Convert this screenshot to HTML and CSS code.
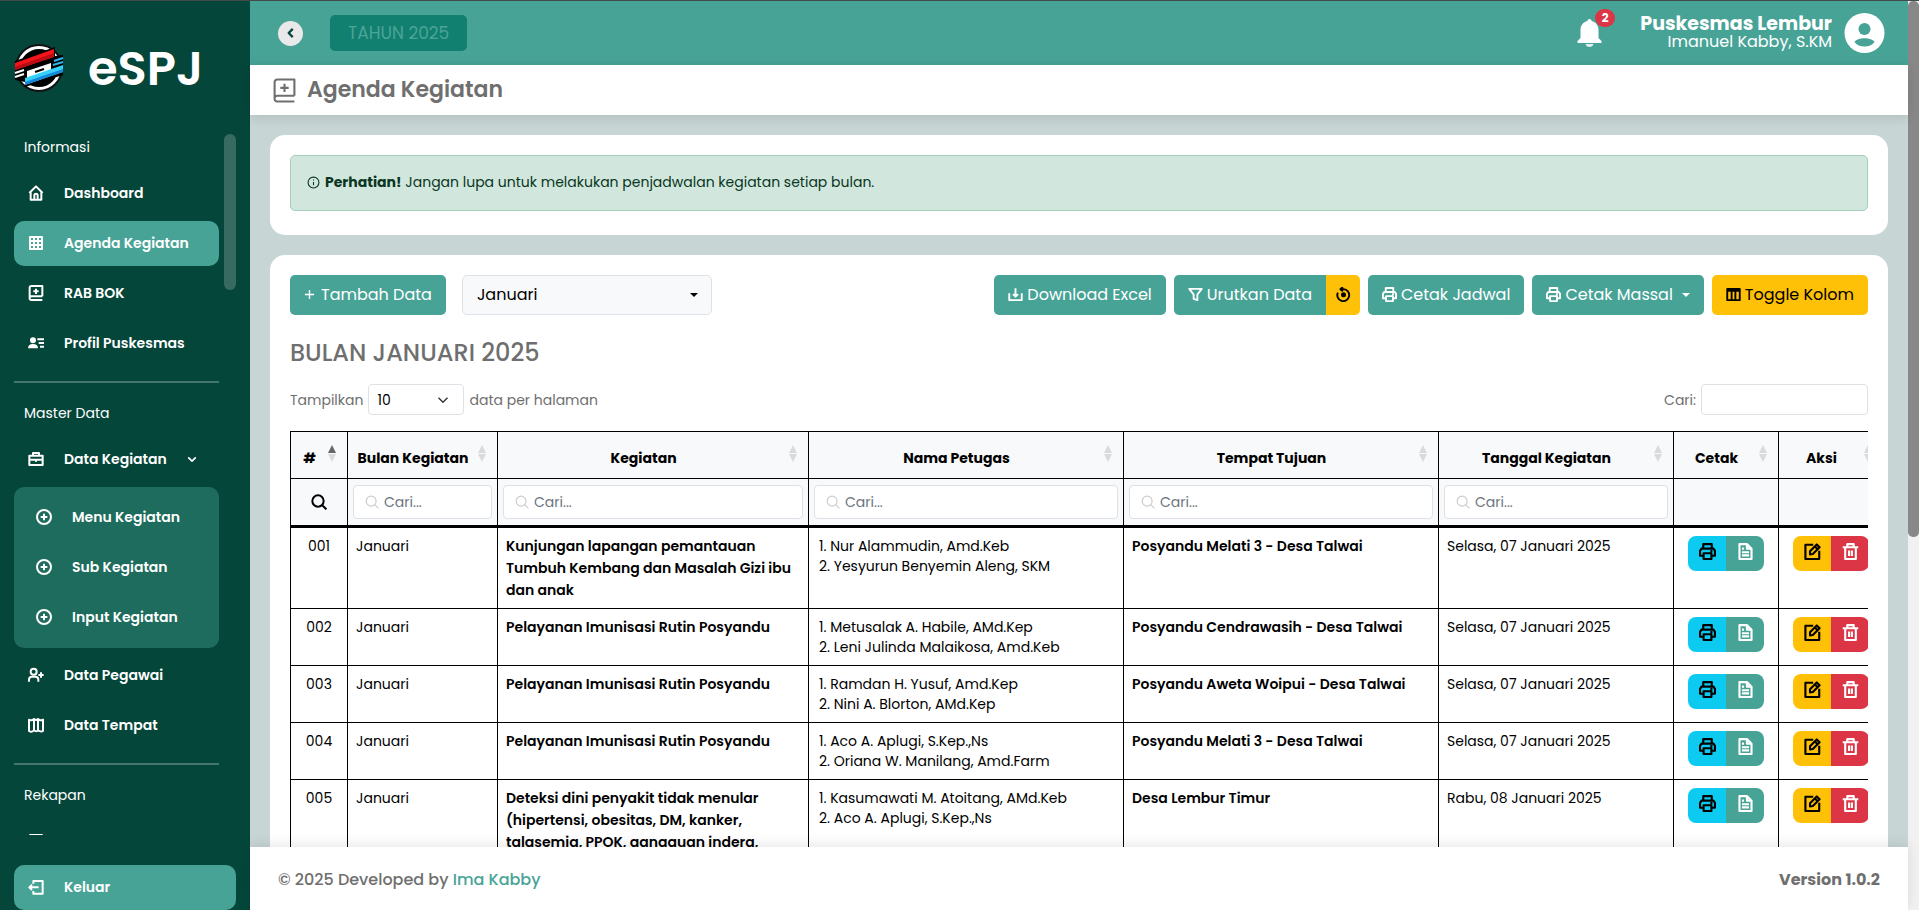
FILE: index.html
```html
<!DOCTYPE html>
<html lang="id">

<head>
  <meta charset="UTF-8" />
  <meta name="viewport" content="width=device-width, initial-scale=1.0" />
  <title>eSPJ - Agenda Kegiatan</title>
  <link rel="stylesheet" href="styles.css">
</head>

<body>
  <svg class="sprite" aria-hidden="true">
    <symbol id="i-home" viewBox="0 0 24 24"><path d="M2 12 12 2l10 10M4 10.500V22h16V10.500M9.500 21v-5.500a2.500 2.500 0 0 1 5 0V21" /></symbol>
    <symbol id="i-grid" viewBox="0 0 24 24"><path d="M3 3h18v18H3zM3 9h18M3 15h18M9 3v18M15 3v18" /></symbol>
    <symbol id="i-book" viewBox="0 0 24 24"><path d="M21.500 17H5a2.500 2.500 0 0 0-2.500 2.500V4A2.500 2.500 0 0 1 5 1.500h16.500V17M2.500 19.500A2.500 2.500 0 0 0 5 22.500h16.500M12 5.500v8M8 9.500h8" /></symbol>
    <symbol id="i-profile" viewBox="0 0 24 24"><g fill="currentColor" stroke="none"><circle cx="7.500" cy="8" r="4.500" /><path d="M0 20c0-4.500 3-6.500 7.500-6.500s7.500 2 7.500 6.500z" /></g><path d="M14 6.500h10M16 12h8M18 17.500h6" /></symbol>
    <symbol id="i-case" viewBox="0 0 24 24"><path d="M2 7h20v14H2zM7.500 7V3h9v4M2 13h20M12 12v4" /></symbol>
    <symbol id="i-pluscircle" viewBox="0 0 24 24"><circle cx="12" cy="12" r="10.500" /><path d="M12 7v10M7 12h10" /></symbol>
    <symbol id="i-useradd" viewBox="0 0 24 24"><circle cx="8.500" cy="7" r="4.500" /><path d="M1.500 22v-3c0-3 2-4.500 4.500-4.500h5c2.500 0 4.500 1.500 4.500 4.500v3M19.500 8v8M15.500 12h8" /></symbol>
    <symbol id="i-map" viewBox="0 0 24 24"><path d="M1.500 4c2.500 1.500 5 1.500 7.500-1 2.500 2 4 2 6 0 2.500 2.500 5 2.500 7.500 1v17c-2.500 1.500-5 1-7.500-1-2 2-3.500 2-6 0-2.500 2.500-5 2.500-7.500 1zM9 3v17M15 3v17" /></symbol>
    <symbol id="i-logout" viewBox="0 0 24 24"><path d="M8 7V3h14v19H8v-4M16 12.500H2M6 8.500l-4 4 4 4" /></symbol>
    <symbol id="i-down" viewBox="0 0 24 24"><path d="M3 8l9 9 9-9" /></symbol>
    <symbol id="i-left" viewBox="0 0 24 24"><path d="M15 5l-7 7 7 7" /></symbol>
    <symbol id="i-info" viewBox="0 0 24 24"><circle cx="12" cy="12" r="10" /><path d="M12 11v6M12 6.500v2" /></symbol>
    <symbol id="i-plus" viewBox="0 0 24 24"><path d="M12 2v20M2 12h20" /></symbol>
    <symbol id="i-download" viewBox="0 0 24 24"><path d="M2 10v11h20V10M12 2v13M8 11.500l4 4 4-4" /></symbol>
    <symbol id="i-filter" viewBox="0 0 24 24"><path d="M2 3h20l-7 9v9l-6-2v-7z" /></symbol>
    <symbol id="i-reset" viewBox="0 0 24 24"><path d="M3 9a9.500 9.500 0 1 0 9-5.500h-3M11 0L7 3.500 11 7" /><circle cx="12" cy="12.500" r="2.500" fill="currentColor" /></symbol>
    <symbol id="i-print" viewBox="0 0 24 24"><path d="M6 8V1.500h12V8M6 18H1.500v-7l2-3h17l2 3v7H18M6.500 14.500h11v8h-11zM16 11.500h3" /></symbol>
    <symbol id="i-columns" viewBox="0 0 24 24"><path d="M2 3h20v18H2zM9 5v16M15 5v16" /><path d="M2 5h20" stroke-width="5" /></symbol>
    <symbol id="i-search" viewBox="0 0 24 24"><circle cx="10.500" cy="10.500" r="8.500" /><path d="M16.500 16.500L23 23" /></symbol>
    <symbol id="i-sort" viewBox="0 0 8 17"><path class="sort-up" d="M4 0l4 8H0z" /><path class="sort-down" d="M0 9h8l-4 8z" /></symbol>
    <symbol id="i-file" viewBox="0 0 24 24"><path d="M3.500 1.500H14l6.500 6.500V22.500h-17zM14 1.500V8h6.500M7 8h3M7 13h10M7 17.500h10" /></symbol>
    <symbol id="i-edit" viewBox="0 0 24 24"><path d="M13 2.500H2v20h19.500V11M8.500 16v-4.500l9.500-9.500 4 4-9.500 9.500zM15.500 5l3.500 3.500" /></symbol>
    <symbol id="i-trash" viewBox="0 0 24 24"><path d="M1 6h22M4.500 6v16.500h15V6M7.500 6V1.500h9V6M10 10.500v8M14 10.500v8" /></symbol>
  </svg>

  <aside class="sidebar">
    <a class="brand" href="#">
      <svg class="brand-logo" viewBox="0 0 48 48" aria-hidden="true">
        <circle cx="24" cy="24" r="24" fill="#111" />
        <circle cx="24" cy="24" r="20.500" fill="#000" stroke="#fff" stroke-width="3" />
        <path d="M0 17L40 3v9l8-1v20L10 43v-5l-10-2z" fill="#000" />
        <path d="M0 19L39 5v8L0 26z" fill="#f5141c" />
        <path d="M0 23L39 9v4L0 26z" fill="#b80d12" />
        <path d="M12 27l24-8v9l-24 8z" fill="#fff" />
        <path d="M20 28l9-3" stroke="#000" stroke-width="2" />
        <path d="M10 34l38-13v7L10 41z" fill="#35d0fb" />
        <path d="M10 38l38-13v3L10 41z" fill="#1787d8" />
        <path d="M39 17l9-3M38 21l10-3" stroke="#2fb4ef" stroke-width="2" />
        <path d="M0 29l9-3M0 33l9-3" stroke="#fff" stroke-width="2" />
      </svg>
      <span class="brand-name">eSPJ</span>
    </a>

    <div class="sidebar-scroll">
      <nav class="menu">
        <p class="menu-label">Informasi</p>
        <a class="menu-link" href="#"><svg class="icon"><use href="#i-home" /></svg>Dashboard</a>
        <a class="menu-link active" href="#"><svg class="icon"><use href="#i-grid" /></svg>Agenda Kegiatan</a>
        <a class="menu-link" href="#"><svg class="icon"><use href="#i-book" /></svg>RAB BOK</a>
        <a class="menu-link" href="#"><svg class="icon"><use href="#i-profile" /></svg>Profil Puskesmas</a>
        <hr>
        <p class="menu-label">Master Data</p>
        <a class="menu-link" href="#"><svg class="icon"><use href="#i-case" /></svg>Data Kegiatan<svg class="icon chevron"><use href="#i-down" /></svg></a>
        <div class="submenu">
          <a class="menu-link" href="#"><svg class="icon"><use href="#i-pluscircle" /></svg>Menu Kegiatan</a>
          <a class="menu-link" href="#"><svg class="icon"><use href="#i-pluscircle" /></svg>Sub Kegiatan</a>
          <a class="menu-link" href="#"><svg class="icon"><use href="#i-pluscircle" /></svg>Input Kegiatan</a>
        </div>
        <a class="menu-link" href="#"><svg class="icon"><use href="#i-useradd" /></svg>Data Pegawai</a>
        <a class="menu-link" href="#"><svg class="icon"><use href="#i-map" /></svg>Data Tempat</a>
        <hr>
        <p class="menu-label">Rekapan</p>
        <a class="menu-link" href="#"><svg class="icon"><use href="#i-grid" /></svg>Rekap</a>
      </nav>
      <div class="sidebar-thumb"></div>
    </div>

    <a class="menu-link active logout" href="#"><svg class="icon"><use href="#i-logout" /></svg>Keluar</a>
  </aside>

  <div class="page">
    <header class="topbar">
      <button class="toggle" type="button" aria-label="Tutup menu"><svg class="icon"><use href="#i-left" /></svg></button>
      <button class="year" type="button" disabled>TAHUN 2025</button>
      <button class="bell" type="button" aria-label="Notifikasi">
        <svg viewBox="0 0 24 28" aria-hidden="true"><path d="M12 0c1.500 0 2 1 2 2 4.500 1 7 4.500 7 9v8l3 3v2H0v-2l3-3v-8c0-4.500 2.500-8 7-9 0-1 .5-2 2-2z" fill="#fff" /><path d="M8 25h8c-.5 2-2 3-4 3s-3.500-1-4-3z" fill="#e4efed" /></svg>
        <span class="badge">2</span>
      </button>
      <a class="user" href="#">
        <span class="user-text">
          <strong>Puskesmas Lembur</strong>
          <span>Imanuel Kabby, S.KM</span>
        </span>
        <svg class="avatar" viewBox="0 0 40 40" aria-hidden="true"><circle cx="20" cy="20" r="20" fill="#fff" /><circle cx="20" cy="16" r="6" fill="#48a397" /><path d="M10 29c3-5 17-5 20 0-4 6-16 6-20 0z" fill="#48a397" /></svg>
      </a>
    </header>

    <div class="titlebar">
      <svg class="icon"><use href="#i-book" /></svg>
      <h1>Agenda Kegiatan</h1>
    </div>

    <main>
      <section class="card">
        <div class="alert"><svg class="icon"><use href="#i-info" /></svg><p><strong>Perhatian!</strong> Jangan lupa untuk melakukan penjadwalan kegiatan setiap bulan.</p></div>
      </section>

      <section class="card">
        <div class="toolbar">
          <button class="btn btn-add" type="button"><svg class="icon"><use href="#i-plus" /></svg>Tambah Data</button>
          <select class="month" aria-label="Bulan">
            <option>Januari</option>
            <option>Februari</option>
            <option>Maret</option>
          </select>
          <div class="actions">
            <button class="btn" type="button"><svg class="icon"><use href="#i-download" /></svg>Download Excel</button>
            <div class="btn-group">
              <button class="btn" type="button"><svg class="icon"><use href="#i-filter" /></svg>Urutkan Data</button>
              <button class="btn btn-warning btn-reset" type="button" aria-label="Reset urutan"><svg class="icon"><use href="#i-reset" /></svg></button>
            </div>
            <button class="btn" type="button"><svg class="icon"><use href="#i-print" /></svg>Cetak Jadwal</button>
            <button class="btn" type="button"><svg class="icon"><use href="#i-print" /></svg>Cetak Massal<span class="caret"></span></button>
            <button class="btn btn-warning" type="button"><svg class="icon"><use href="#i-columns" /></svg>Toggle Kolom</button>
          </div>
        </div>

        <h2>BULAN JANUARI 2025</h2>

        <div class="table-tools">
          <label>Tampilkan
            <select class="length">
              <option>10</option>
              <option>25</option>
              <option>50</option>
            </select>
            data per halaman</label>
          <label>Cari: <input class="search" type="search"></label>
        </div>

        <div class="table-wrap">
          <table>
            <colgroup>
              <col class="col-no">
              <col class="col-bulan">
              <col class="col-kegiatan">
              <col>
              <col>
              <col class="col-tanggal">
              <col class="col-aksi">
              <col class="col-aksi">
            </colgroup>
            <thead>
              <tr>
                <th><div class="th"><span>#</span><svg class="sort asc"><use href="#i-sort" /></svg></div></th>
                <th><div class="th"><span>Bulan Kegiatan</span><svg class="sort"><use href="#i-sort" /></svg></div></th>
                <th><div class="th"><span>Kegiatan</span><svg class="sort"><use href="#i-sort" /></svg></div></th>
                <th><div class="th"><span>Nama Petugas</span><svg class="sort"><use href="#i-sort" /></svg></div></th>
                <th><div class="th"><span>Tempat Tujuan</span><svg class="sort"><use href="#i-sort" /></svg></div></th>
                <th><div class="th"><span>Tanggal Kegiatan</span><svg class="sort"><use href="#i-sort" /></svg></div></th>
                <th><div class="th"><span>Cetak</span><svg class="sort"><use href="#i-sort" /></svg></div></th>
                <th><div class="th"><span>Aksi</span><svg class="sort"><use href="#i-sort" /></svg></div></th>
              </tr>
              <tr class="filters">
                <td class="center"><svg class="icon"><use href="#i-search" /></svg></td>
                <td><label class="filter"><svg class="icon"><use href="#i-search" /></svg><input type="text" placeholder="Cari..." aria-label="Cari bulan kegiatan"></label></td>
                <td><label class="filter"><svg class="icon"><use href="#i-search" /></svg><input type="text" placeholder="Cari..." aria-label="Cari kegiatan"></label></td>
                <td><label class="filter"><svg class="icon"><use href="#i-search" /></svg><input type="text" placeholder="Cari..." aria-label="Cari nama petugas"></label></td>
                <td><label class="filter"><svg class="icon"><use href="#i-search" /></svg><input type="text" placeholder="Cari..." aria-label="Cari tempat tujuan"></label></td>
                <td><label class="filter"><svg class="icon"><use href="#i-search" /></svg><input type="text" placeholder="Cari..." aria-label="Cari tanggal kegiatan"></label></td>
                <td></td>
                <td></td>
              </tr>
            </thead>
            <tbody>
              <tr>
                <td class="center">001</td>
                <td>Januari</td>
                <td class="bold">Kunjungan lapangan pemantauan Tumbuh Kembang dan Masalah Gizi ibu dan anak</td>
                <td><ol><li>Nur Alammudin, Amd.Keb</li><li>Yesyurun Benyemin Aleng, SKM</li></ol></td>
                <td class="bold">Posyandu Melati 3 - Desa Talwai</td>
                <td>Selasa, 07 Januari 2025</td>
                <td><div class="row-btns"><button class="print" type="button" aria-label="Cetak"><svg class="icon"><use href="#i-print" /></svg></button><button class="file" type="button" aria-label="Dokumen"><svg class="icon"><use href="#i-file" /></svg></button></div></td>
                <td><div class="row-btns"><button class="edit" type="button" aria-label="Ubah"><svg class="icon"><use href="#i-edit" /></svg></button><button class="delete" type="button" aria-label="Hapus"><svg class="icon"><use href="#i-trash" /></svg></button></div></td>
              </tr>
              <tr>
                <td class="center">002</td>
                <td>Januari</td>
                <td class="bold">Pelayanan Imunisasi Rutin Posyandu</td>
                <td><ol><li>Metusalak A. Habile, AMd.Kep</li><li>Leni Julinda Malaikosa, Amd.Keb</li></ol></td>
                <td class="bold">Posyandu Cendrawasih - Desa Talwai</td>
                <td>Selasa, 07 Januari 2025</td>
                <td><div class="row-btns"><button class="print" type="button" aria-label="Cetak"><svg class="icon"><use href="#i-print" /></svg></button><button class="file" type="button" aria-label="Dokumen"><svg class="icon"><use href="#i-file" /></svg></button></div></td>
                <td><div class="row-btns"><button class="edit" type="button" aria-label="Ubah"><svg class="icon"><use href="#i-edit" /></svg></button><button class="delete" type="button" aria-label="Hapus"><svg class="icon"><use href="#i-trash" /></svg></button></div></td>
              </tr>
              <tr>
                <td class="center">003</td>
                <td>Januari</td>
                <td class="bold">Pelayanan Imunisasi Rutin Posyandu</td>
                <td><ol><li>Ramdan H. Yusuf, Amd.Kep</li><li>Nini A. Blorton, AMd.Kep</li></ol></td>
                <td class="bold">Posyandu Aweta Woipui - Desa Talwai</td>
                <td>Selasa, 07 Januari 2025</td>
                <td><div class="row-btns"><button class="print" type="button" aria-label="Cetak"><svg class="icon"><use href="#i-print" /></svg></button><button class="file" type="button" aria-label="Dokumen"><svg class="icon"><use href="#i-file" /></svg></button></div></td>
                <td><div class="row-btns"><button class="edit" type="button" aria-label="Ubah"><svg class="icon"><use href="#i-edit" /></svg></button><button class="delete" type="button" aria-label="Hapus"><svg class="icon"><use href="#i-trash" /></svg></button></div></td>
              </tr>
              <tr>
                <td class="center">004</td>
                <td>Januari</td>
                <td class="bold">Pelayanan Imunisasi Rutin Posyandu</td>
                <td><ol><li>Aco A. Aplugi, S.Kep.,Ns</li><li>Oriana W. Manilang, Amd.Farm</li></ol></td>
                <td class="bold">Posyandu Melati 3 - Desa Talwai</td>
                <td>Selasa, 07 Januari 2025</td>
                <td><div class="row-btns"><button class="print" type="button" aria-label="Cetak"><svg class="icon"><use href="#i-print" /></svg></button><button class="file" type="button" aria-label="Dokumen"><svg class="icon"><use href="#i-file" /></svg></button></div></td>
                <td><div class="row-btns"><button class="edit" type="button" aria-label="Ubah"><svg class="icon"><use href="#i-edit" /></svg></button><button class="delete" type="button" aria-label="Hapus"><svg class="icon"><use href="#i-trash" /></svg></button></div></td>
              </tr>
              <tr>
                <td class="center">005</td>
                <td>Januari</td>
                <td class="bold">Deteksi dini penyakit tidak menular (hipertensi, obesitas, DM, kanker, talasemia, PPOK, gangguan indera,</td>
                <td><ol><li>Kasumawati M. Atoitang, AMd.Keb</li><li>Aco A. Aplugi, S.Kep.,Ns</li></ol></td>
                <td class="bold">Desa Lembur Timur</td>
                <td>Rabu, 08 Januari 2025</td>
                <td><div class="row-btns"><button class="print" type="button" aria-label="Cetak"><svg class="icon"><use href="#i-print" /></svg></button><button class="file" type="button" aria-label="Dokumen"><svg class="icon"><use href="#i-file" /></svg></button></div></td>
                <td><div class="row-btns"><button class="edit" type="button" aria-label="Ubah"><svg class="icon"><use href="#i-edit" /></svg></button><button class="delete" type="button" aria-label="Hapus"><svg class="icon"><use href="#i-trash" /></svg></button></div></td>
              </tr>
            </tbody>
          </table>
        </div>
      </section>
    </main>

    <footer>
      <p>© 2025 Developed by <a href="#">Ima Kabby</a></p>
      <strong>Version 1.0.2</strong>
    </footer>
  </div>

  <div class="page-scroll"><div class="page-thumb"></div></div>
</body>

</html>
```

FILE: styles.css
```css
:root {
  --teal: #48a397;
  --dark: #05463a;
  --yellow: #ffc107;
  --red: #dc3545;
  --grey: #6f6f6f;
  --line: #dee2e6;
}

* {
  margin: 0;
  padding: 0;
  box-sizing: border-box;
}

body {
  height: 100vh;
  display: flex;
  overflow: hidden;
  border-top: 1px solid #44494a;
  background: #c7d5d4;
  font-family: Poppins, Inter, sans-serif;
  font-size: 15px;
  line-height: 22px;
  color: var(--grey);
}

a {
  color: inherit;
  text-decoration: none;
}

button,
input,
select {
  font: inherit;
  border: none;
}

.sprite {
  position: absolute;
  width: 0;
  height: 0;
}

.icon {
  width: 16px;
  height: 16px;
  flex: none;
  fill: none;
  stroke: currentColor;
  stroke-width: 3;
  stroke-linejoin: round;
}

/* Sidebar */
.sidebar {
  width: 250px;
  flex: none;
  display: flex;
  flex-direction: column;
  padding: 0 14px;
  background: var(--dark);
  color: white;
}

.brand {
  height: 133px;
  flex: none;
  display: flex;
  align-items: center;
  gap: 24px;
}

.brand-logo {
  width: 50px;
  height: 48px;
}

.brand-name {
  padding-top: 2px;
  font-size: 48px;
  font-weight: 600;
  line-height: 48px;
}

.sidebar-scroll {
  flex: 1;
  min-height: 0;
  overflow: hidden;
  display: flex;
  gap: 5px;
  margin-bottom: 30px;
}

.menu {
  flex: 1;
}

.menu-label {
  height: 37px;
  padding-left: 10px;
  line-height: 26px;
  font-size: 14px;
}

.menu-link {
  height: 45px;
  margin-bottom: 5px;
  padding: 0 0 2px 14px;
  display: flex;
  align-items: center;
  gap: 20px;
  border-radius: 10px;
  font-size: 14px;
  font-weight: 600;
}

.menu-link.active {
  background: var(--teal);
}

.menu hr {
  height: 2px;
  border: none;
  margin: 15px 0 17px;
  background: #44766c;
}

.chevron {
  width: 10px;
  height: 10px;
  stroke-width: 4;
}

.submenu {
  padding: 8px;
  margin-bottom: 5px;
  border-radius: 10px;
  background: #1d6c5d;
}

.submenu .menu-link:last-child,
.logout {
  margin-bottom: 0;
}

.logout {
  flex: none;
}

.sidebar-thumb {
  width: 12px;
  height: 156px;
  border-radius: 6px;
  background: #376b61;
}

/* Content */
.page {
  flex: 1;
  min-width: 0;
  display: flex;
  flex-direction: column;
}

.topbar {
  height: 64px;
  flex: none;
  display: flex;
  align-items: center;
  padding: 0 23px 0 28px;
  background: var(--teal);
  color: white;
}

.toggle {
  width: 25px;
  height: 25px;
  padding-bottom: 1px;
  border-radius: 50%;
  background: #e9e9e9;
  color: var(--dark);
  display: flex;
  align-items: center;
  justify-content: center;
}

.toggle .icon {
  width: 14px;
  height: 14px;
  stroke-width: 4;
}

.year {
  height: 36px;
  margin-left: 27px;
  padding: 0 18px;
  border-radius: 5px;
  background: #128070;
  color: #4ba497;
  font-size: 17px;
}

.bell {
  margin-left: auto;
  position: relative;
  background: none;
}

.bell svg {
  display: block;
  width: 25px;
  height: 28px;
}

.badge {
  position: absolute;
  left: 18px;
  top: -10px;
  width: 20px;
  border-radius: 9px;
  background: var(--red);
  color: white;
  font-size: 12px;
  font-weight: 700;
  line-height: 18px;
}

.user {
  margin-left: 38px;
  display: flex;
  align-items: center;
  gap: 12px;
}

.user-text {
  display: flex;
  flex-direction: column;
  align-items: flex-end;
  font-size: 16px;
  line-height: 18px;
}

.user-text strong {
  font-size: 19px;
}

.avatar {
  width: 41px;
  height: 40px;
}

.titlebar {
  height: 50px;
  flex: none;
  display: flex;
  align-items: center;
  gap: 10px;
  padding-left: 22px;
  background: white;
  box-shadow: 0 2px 12px rgba(0, 0, 0, 0.12);
  z-index: 1;
}

.titlebar .icon {
  width: 25px;
  height: 25px;
  stroke-width: 2;
}

h1 {
  font-size: 22px;
  font-weight: 600;
}

main {
  flex: 1;
  min-height: 0;
  overflow: hidden;
  padding: 20px;
}

.card {
  margin-bottom: 20px;
  padding: 20px;
  border-radius: 15px;
  background: white;
}

.alert {
  height: 56px;
  margin-bottom: 4px;
  padding: 0 16px 2px;
  display: flex;
  align-items: center;
  gap: 5px;
  border: 1px solid #a3cfbb;
  border-radius: 5px;
  background: #d1e7dd;
  color: #0a3622;
  font-size: 14px;
}

.alert .icon {
  width: 13px;
  height: 13px;
  stroke-width: 2;
}

.toolbar {
  display: flex;
  gap: 16px;
}

.btn {
  height: 40px;
  padding: 0 14px;
  display: flex;
  align-items: center;
  gap: 4px;
  border-radius: 5px;
  background: var(--teal);
  color: white;
  font-size: 16px;
  white-space: nowrap;
}

.btn .icon {
  width: 15px;
  height: 15px;
  margin-bottom: 2px;
  stroke-width: 3;
}

.btn-add {
  gap: 6px;
}

.btn-add .icon {
  width: 11px;
  height: 11px;
}

.btn-warning {
  background: var(--yellow);
  color: black;
}

.btn-group {
  display: flex;
}

.btn-group .btn:first-child {
  border-radius: 5px 0 0 5px;
}

.btn-reset {
  width: 34px;
  padding: 0 10px;
  border-radius: 0 5px 5px 0;
}

.caret {
  margin-left: 5px;
  border: 4px solid transparent;
  border-top-color: currentColor;
  border-bottom: none;
}

.month {
  width: 250px;
  height: 40px;
  padding: 0 14px;
  appearance: none;
  border: 1px solid var(--line);
  border-radius: 5px;
  background: #f8f9fa url("data:image/svg+xml,%3Csvg xmlns='http://www.w3.org/2000/svg' viewBox='0 0 8 4'%3E%3Cpath d='M0 0h8L4 4z'/%3E%3C/svg%3E") no-repeat right 13px center / 8px 4px;
  color: black;
  font-size: 16px;
}

.actions {
  margin-left: auto;
  display: flex;
  gap: 8px;
}

h2 {
  margin: 23px 0 16px;
  font-size: 24px;
  font-weight: 500;
  line-height: 30px;
}

.table-tools {
  display: flex;
  justify-content: space-between;
  font-size: 14px;
}

.table-tools label {
  display: flex;
  align-items: center;
  gap: 5px;
}

.length,
.search {
  height: 31px;
  padding: 0 8px;
  border: 1px solid var(--line);
  border-radius: 4px;
  background-color: white;
}

.length {
  width: 96px;
  appearance: none;
  background-image: url("data:image/svg+xml,%3Csvg xmlns='http://www.w3.org/2000/svg' viewBox='0 0 16 16'%3E%3Cpath fill='none' stroke='%23343a40' stroke-width='2' d='m2 5 6 6 6-6'/%3E%3C/svg%3E");
  background-repeat: no-repeat;
  background-position: right 14px center;
  background-size: 12px 12px;
}

.search {
  width: 167px;
}

.table-wrap {
  margin-top: 16px;
  overflow: hidden;
}

table {
  width: calc(100% + 16px);
  table-layout: fixed;
  border-collapse: collapse;
  color: black;
  font-size: 14px;
}

.col-no {
  width: 57px;
}

.col-bulan {
  width: 150px;
}

.col-kegiatan {
  width: 311px;
}

.col-tanggal {
  width: 235px;
}

.col-aksi {
  width: 105px;
}

th,
td {
  border: 1px solid black;
  padding: 7px 8px;
  vertical-align: top;
  text-align: left;
}

thead {
  background: #f8f9fa;
  border-bottom: 3px solid black;
}

th {
  padding: 0 11px 0 7px;
}

.th {
  height: 46px;
  display: flex;
  align-items: center;
  font-weight: 700;
}

.th span {
  flex: 1;
  padding-top: 6px;
  text-align: center;
  white-space: nowrap;
}

.sort {
  width: 8px;
  height: 17px;
  margin: 0 0 3px 7px;
  flex: none;
  color: #d9dadb;
}

.sort.asc {
  color: #666;
}

.sort-up {
  fill: currentColor;
}

.sort-down {
  fill: #d9dadb;
}

.filters td {
  height: 48px;
  padding: 0 5px;
  vertical-align: middle;
}

.filters .center .icon {
  display: block;
  margin: 0 auto;
  stroke-width: 3;
}

.filter {
  height: 34px;
  padding: 0 11px;
  display: flex;
  align-items: center;
  gap: 5px;
  border: 1px solid var(--line);
  border-radius: 4px;
  background: white;
}

.filter .icon {
  width: 14px;
  height: 14px;
  stroke-width: 2;
  color: #ccc;
}

.filter input {
  width: 100%;
  min-width: 0;
  outline: none;
}

.filter input::placeholder {
  color: #6c757d;
}

.center {
  text-align: center;
}

.bold {
  font-weight: 600;
}

ol {
  margin: 1px 0 1px 2px;
  line-height: 20px;
  list-style-position: inside;
}

.row-btns {
  margin: 1px 0;
  display: flex;
  justify-content: center;
}

.row-btns button {
  width: 38px;
  height: 35px;
  padding-bottom: 4px;
  display: flex;
  align-items: center;
  justify-content: center;
}

.row-btns button:first-child {
  border-radius: 8px 0 0 8px;
}

.row-btns button:last-child {
  border-radius: 0 8px 8px 0;
  color: white;
}

.row-btns .icon {
  width: 17px;
  height: 17px;
}

.print {
  background: #0dcaf0;
}

.file {
  background: var(--teal);
}

.edit {
  background: var(--yellow);
}

.delete {
  background: var(--red);
}

footer {
  height: 63px;
  flex: none;
  display: flex;
  align-items: center;
  justify-content: space-between;
  padding: 2px 28px 0;
  background: white;
  box-shadow: 0 -2px 12px rgba(0, 0, 0, 0.1);
  font-size: 16px;
  font-weight: 500;
  z-index: 1;
}

footer a {
  color: var(--teal);
}

footer strong {
  font-weight: 700;
}

.page-scroll {
  width: 11px;
  flex: none;
  background: #f1f1f1;
}

.page-thumb {
  height: 59%;
  border-radius: 5px;
  background: #888;
}
```
